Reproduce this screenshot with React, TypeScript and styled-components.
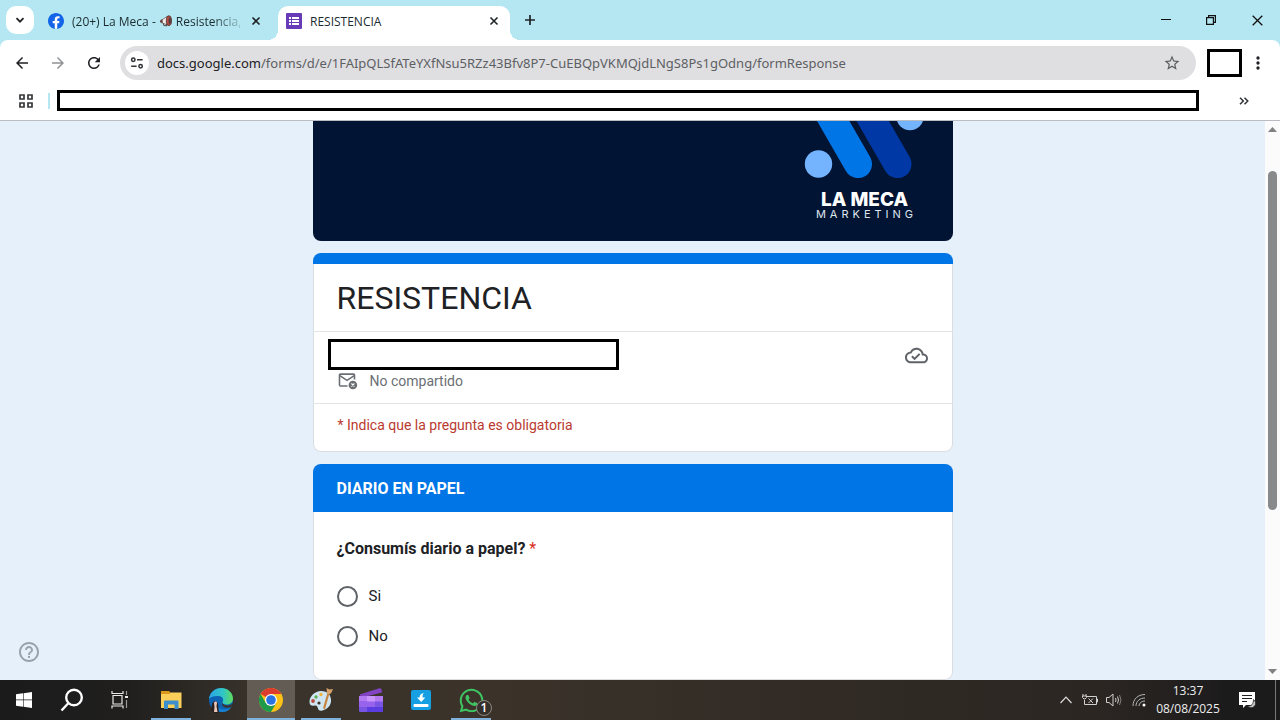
import React from 'react';
import styled, { createGlobalStyle } from 'styled-components';
import { FaWhatsapp } from 'react-icons/fa';

const UI = '"Open Sans", "Noto Sans", sans-serif';
const FORM = 'Roboto, "Liberation Sans", sans-serif';

const GlobalStyle = createGlobalStyle`
  * { box-sizing: border-box; }
  body { margin: 0; font-family: ${FORM}; color: #202124; }
  button, input { font: inherit; color: inherit; border: 0; padding: 0; margin: 0; background: none; }
  svg { display: block; flex: none; }
`;

const Screen = styled.div`
  display: flex;
  flex-direction: column;
  height: 100vh;
  overflow: hidden;
  background: #b4e7f1;
`;

/* ---------- browser chrome ---------- */

const TabStrip = styled.header`
  display: flex;
  align-items: flex-end;
  height: 40px;
  padding-left: 6px;
  font-family: ${UI};
  font-size: 12px;
  color: #1c2b30;
`;

const TabSearch = styled.button`
  display: grid;
  place-items: center;
  width: 28px;
  height: 28px;
  margin-bottom: 6px;
  border-radius: 10px;
  background: #fff;
`;

const Tab = styled.div<{ $active?: boolean }>`
  position: relative;
  display: flex;
  align-items: center;
  gap: 8px;
  width: ${p => (p.$active ? 232 : 236)}px;
  height: 34px;
  margin-left: ${p => (p.$active ? 0 : 8)}px;
  padding: ${p => (p.$active ? '0 8px 4px 8px' : '0 14px 4px 6px')};
  border-radius: 10px 10px 0 0;
  background: ${p => (p.$active ? '#fff' : 'transparent')};

  &::before, &::after {
    content: '';
    display: ${p => (p.$active ? 'block' : 'none')};
    position: absolute;
    bottom: 0;
    width: 10px;
    height: 10px;
  }
  &::before { left: -10px; background: radial-gradient(circle at 0 0, transparent 10px, #fff 10px); }
  &::after { right: -10px; background: radial-gradient(circle at 100% 0, transparent 10px, #fff 10px); }
`;

const TabTitle = styled.span<{ $fade?: boolean }>`
  display: flex;
  align-items: center;
  gap: 3px;
  flex: 1;
  min-width: 0;
  white-space: nowrap;
  mask-image: ${p => (p.$fade ? 'linear-gradient(to right, #000 84%, rgba(0, 0, 0, 0.2))' : 'none')};
`;

const IconButton = styled.button<{ $w?: number; $h?: number }>`
  display: grid;
  place-items: center;
  flex: none;
  width: ${p => p.$w ?? 16}px;
  height: ${p => p.$h ?? 16}px;
`;

const NewTab = styled(IconButton)`
  margin: 0 auto 6px 6px;
`;

const Chrome = styled.div`
  height: 81px;
  flex: none;
  border-radius: 8px 8px 0 0;
  border-bottom: 1px solid #b9bdc1;
  background: #fff;
  color: #202124;
  font-family: ${UI};
`;

const Toolbar = styled.div`
  display: flex;
  align-items: center;
  height: 46px;
  padding: 0 10px 0 4px;
`;

const Omnibox = styled.form`
  display: flex;
  align-items: center;
  flex: 1;
  height: 34px;
  margin: 0 11px 0 8px;
  padding: 0 14px 0 5px;
  border-radius: 17px;
  background: #dfdfe2;
  font-family: "Noto Sans", "Open Sans", sans-serif;
  font-size: 13px;
`;

const SiteInfo = styled(IconButton)`
  margin-right: 8px;
  border-radius: 50%;
  background: #fff;
`;

const UrlPath = styled.input`
  flex: 1;
  min-width: 0;
  color: #5d6063;
  outline: 0;
`;

const Redacted = styled.div<{ $w?: number; $h: number }>`
  flex: ${p => (p.$w ? 'none' : 1)};
  width: ${p => (p.$w ? `${p.$w}px` : 'auto')};
  height: ${p => p.$h}px;
  border: 3px solid #000;
  background: #fff;
`;

const MenuButton = styled(IconButton)`
  margin-left: 4px;
`;

const Bookmarks = styled.nav`
  display: flex;
  align-items: center;
  height: 29px;
  padding: 0 24px 0 16px;
`;

const Divider = styled.span`
  width: 2px;
  height: 16px;
  margin: 0 7px 0 12px;
  background: #b4e7f1;
`;

const More = styled(IconButton)`
  margin-left: 33px;
`;

/* ---------- page ---------- */

const Viewport = styled.div`
  position: relative;
  display: flex;
  flex: 1;
  min-height: 0;
  background: #e5f0fb;
`;

const Page = styled.main`
  flex: 1;
  min-width: 0;
  overflow: hidden;
`;

const Column = styled.div`
  display: flex;
  flex-direction: column;
  gap: 12px;
  max-width: 640px;
  margin: 0 auto;
`;

const Banner = styled.div`
  display: flex;
  justify-content: flex-end;
  height: 120px;
  padding-right: 23px;
  border-radius: 0 0 8px 8px;
  background: #021433;
`;

const Brand = styled.div`
  display: flex;
  flex-direction: column;
  align-items: center;
  width: 130px;
  color: #fff;
  font-family: Inter, sans-serif;
`;

const BrandName = styled.strong`
  margin-top: 9px;
  font-size: 19px;
  font-weight: 800;
  line-height: 20px;
`;

const BrandSub = styled.span`
  padding-left: 4px;
  color: #dfe5ee;
  font-size: 11px;
  line-height: 8px;
  letter-spacing: 4px;
`;

const Card = styled.section`
  overflow: hidden;
  border-radius: 8px;
  background: #fff;
  box-shadow: inset 0 0 0 1px #dadce0;
`;

const Accent = styled.div`
  height: 11px;
  background: #0075e6;
`;

const Title = styled.h1`
  margin: 0;
  padding: 13px 24px 11px;
  font-size: 32px;
  font-weight: 400;
  line-height: 43px;
`;

const Account = styled.div`
  display: flex;
  justify-content: space-between;
  height: 73px;
  padding: 7px 25px 0 15px;
  border: solid #e2e4e7;
  border-width: 1px 0;
`;

const NotShared = styled.div`
  display: flex;
  align-items: center;
  gap: 12px;
  padding: 1px 0 0 10px;
  color: #6b6f74;
  font-size: 14px;
  line-height: 20px;
`;

const Saved = styled.div`
  padding-top: 5px;
`;

const Required = styled.p`
  margin: 0;
  padding: 11px 25px 17px;
  color: #b93a2f;
  font-size: 14px;
  line-height: 20px;
`;

const SectionHead = styled.h2`
  margin: 0;
  padding: 13px 24px 11px;
  background: #0075e6;
  color: #fff;
  font-size: 16px;
  font-weight: 700;
  line-height: 24px;
`;

const Question = styled.fieldset`
  margin: 0;
  border: 0;
  padding: 25px 24px 24px;
`;

const Legend = styled.legend`
  float: left;
  width: 100%;
  padding: 0;
  margin-bottom: 15px;
  font-size: 16px;
  font-weight: 700;
  line-height: 24px;
`;

const Star = styled.span`
  color: #d93025;
  font-weight: 400;
`;

const Option = styled.label`
  display: flex;
  align-items: center;
  clear: both;
  gap: 11px;
  height: 40px;
  font-size: 15px;
`;

const Radio = styled.input`
  appearance: none;
  width: 21px;
  height: 21px;
  border: 2px solid #5f6368;
  border-radius: 50%;
  &:checked { border-color: #0075e6; background: radial-gradient(#0075e6 5px, transparent 6px); }
`;

const Help = styled.button`
  position: absolute;
  left: 17px;
  bottom: 16px;
  color: #9aa2ab;
`;

const Scrollbar = styled.div`
  display: flex;
  flex-direction: column;
  align-items: center;
  width: 15px;
  padding: 4px 0;
  background: #fbfbfc;
`;

const Track = styled.div`
  display: flex;
  flex-direction: column;
  flex: 1;
  padding: 37px 0 157px;
`;

const Thumb = styled.div`
  flex: 1;
  width: 9px;
  border-radius: 5px;
  background: #87898b;
`;

/* ---------- taskbar ---------- */

const Taskbar = styled.footer`
  display: flex;
  flex: none;
  height: 40px;
  background: linear-gradient(to right, #1b1b1c 0%, #201f1e 10%, #39332b 20%, #3b332a 38%, #332c26 60%, #2b2622 86%, #1c1b1c 96%);
  color: #fff;
  font-family: ${UI};
`;

const TaskButton = styled.button<{ $state?: 'open' | 'active' }>`
  position: relative;
  display: grid;
  place-items: center;
  width: 48px;
  height: 40px;
  background: ${p => (p.$state === 'active' ? '#625c55' : 'transparent')};

  &::after {
    content: '';
    display: ${p => (p.$state ? 'block' : 'none')};
    position: absolute;
    bottom: 0;
    left: ${p => (p.$state === 'active' ? 0 : 4)}px;
    right: ${p => (p.$state === 'active' ? 0 : 4)}px;
    height: 2px;
    background: #7fb2dc;
  }
`;

const Apps = styled.div`
  display: flex;
  gap: 2px;
  flex: 1;
  padding-left: 3px;
`;

const Badge = styled.span`
  position: absolute;
  left: 29px;
  top: 20px;
  display: grid;
  place-items: center;
  width: 16px;
  height: 16px;
  border: 1px solid #8c8780;
  border-radius: 50%;
  background: #35302a;
  font-size: 12px;
  font-weight: 600;
  line-height: 14px;
`;

const Tray = styled.div`
  display: flex;
  align-items: center;
`;

const Clock = styled.time`
  width: 72px;
  margin-right: 8px;
  color: #eee;
  font-size: 12px;
  line-height: 18px;
  text-align: center;
`;

const ShowDesktop = styled.button`
  width: 5px;
  height: 40px;
  margin-left: 13px;
  border-left: 1px solid #77787a;
`;

/* ---------- icons ---------- */

const Material = ({ d, size, color = 'currentColor' }: { d: string; size: number; color?: string }) => (
  <svg width={size} height={size} viewBox="0 0 24 24" fill={color}><path d={d} /></svg>
);

const BACK = 'M20 11H7.83l5.59-5.59L12 4l-8 8 8 8 1.41-1.41L7.83 13H20v-2z';
const FORWARD = 'M4 13h12.17l-5.59 5.59L12 20l8-8-8-8-1.41 1.41L16.17 11H4v2z';
const RELOAD = 'M17.65 6.35C16.2 4.9 14.21 4 12 4c-4.42 0-7.99 3.58-7.99 8s3.57 8 7.99 8c3.73 0 6.84-2.55 7.73-6h-2.08c-.82 2.33-3.04 4-5.65 4-3.31 0-6-2.69-6-6s2.69-6 6-6c1.66 0 3.14.69 4.22 1.78L13 11h7V4l-2.35 2.35z';
const STAR = 'M22 9.24l-7.19-.62L12 2 9.19 8.63 2 9.24l5.46 4.73L5.82 21 12 17.27 18.18 21l-1.63-7.03L22 9.24zM12 15.4l-3.76 2.27 1-4.28-3.32-2.88 4.38-.38L12 6.1l1.71 4.04 4.38.38-3.32 2.88 1 4.28L12 15.4z';
const DOTS = 'M12 8a2 2 0 100-4 2 2 0 000 4zm0 2a2 2 0 100 4 2 2 0 000-4zm0 6a2 2 0 100 4 2 2 0 000-4z';
const CLOUD = 'M19.35 10.04C18.67 6.59 15.64 4 12 4 9.11 4 6.6 5.64 5.35 8.04 2.34 8.36 0 10.91 0 14c0 3.31 2.69 6 6 6h13c2.76 0 5-2.24 5-5 0-2.64-2.05-4.78-4.65-4.96zM19 18H6c-2.21 0-4-1.79-4-4 0-2.05 1.53-3.76 3.56-3.97l1.07-.11.5-.95C8.08 7.14 9.94 6 12 6c2.62 0 4.88 1.86 5.39 4.43l.3 1.5 1.53.11c1.56.1 2.78 1.41 2.78 2.96 0 1.65-1.35 3-3 3zm-9-3.82l-2.09-2.09L6.5 13.5 10 17l6.01-6.01-1.41-1.41z';
const HELP = 'M11 18h2v-2h-2v2zm1-16C6.48 2 2 6.48 2 12s4.48 10 10 10 10-4.48 10-10S17.52 2 12 2zm0 18c-4.41 0-8-3.59-8-8s3.59-8 8-8 8 3.59 8 8-3.59 8-8 8zm0-14c-2.21 0-4 1.79-4 4h2c0-1.1.9-2 2-2s2 .9 2 2c0 2-3 1.75-3 5h2c0-2.25 3-2.5 3-5 0-2.21-1.79-4-4-4z';
const FACEBOOK = 'M24 12.073c0-6.627-5.373-12-12-12s-12 5.373-12 12c0 5.99 4.388 10.954 10.125 11.854v-8.385H7.078v-3.47h3.047V9.43c0-3.007 1.792-4.669 4.533-4.669 1.312 0 2.686.235 2.686.235v2.953H15.83c-1.491 0-1.956.925-1.956 1.874v2.25h3.328l-.532 3.47h-2.796v8.385C19.612 23.027 24 18.062 24 12.073z';

const CloseIcon = () => (
  <svg width="10" height="10" viewBox="0 0 10 10" stroke="#1f2426" strokeWidth="1.6"><path d="M1.5 1.5l7 7M8.5 1.5l-7 7" /></svg>
);

const FacebookIcon = () => (
  <svg width="16" height="16" viewBox="0 0 24 24"><circle cx="12" cy="12" r="11" fill="#fff" /><path fill="#1464e8" d={FACEBOOK} /></svg>
);

const Megaphone = () => (
  <svg width="14" height="12" viewBox="0 0 16 14">
    <path d="M1.5 7 L9.5 1.5 L10.5 12 L2 8.6z" fill="#f1ece9" stroke="#5c4b49" strokeWidth=".8" />
    <path d="M1.2 6.4l2.6-1.6.5 4.6-3-1z" fill="#5c3f3d" />
    <path d="M5 9.8l.4 2.4 3.4.5-.4-2" fill="none" stroke="#4a3b39" strokeWidth="1.1" />
    <ellipse cx="11.4" cy="6.6" rx="3" ry="5.6" fill="#bb4a42" stroke="#46302f" />
    <ellipse cx="12.4" cy="6.6" rx="1.4" ry="3.8" fill="#503f40" />
  </svg>
);

const FormsIcon = () => (
  <svg width="16" height="16" viewBox="0 0 16 16">
    <rect width="16" height="16" rx="1" fill="#673ab7" />
    <path fill="#fff" d="M3 4h2v2H3zm3 0h7v2H6zM3 7h2v2H3zm3 0h7v2H6zM3 10h2v2H3zm3 0h7v2H6z" />
  </svg>
);

const TuneIcon = () => (
  <svg width="14" height="14" viewBox="0 0 14 14" fill="none" stroke="#303235" strokeWidth="1.5">
    <circle cx="3.3" cy="3.8" r="1.7" /><path d="M7 3.8h5.6M1.2 10.2h5.4" /><circle cx="10.6" cy="10.2" r="1.7" />
  </svg>
);

const GridIcon = () => (
  <svg width="18" height="18" viewBox="0 0 18 18" fill="none" stroke="#35373a" strokeWidth="1.7">
    <path d="M3 3h4v4H3zM11 3h4v4h-4zM3 11h4v4H3zM11 11h4v4h-4z" />
  </svg>
);

const MailOff = () => (
  <svg width="20" height="18" viewBox="0 0 20 18" fill="none" stroke="#6b6f74">
    <path d="M9.5 14H2.4a.9.9 0 01-.9-.9V3a.9.9 0 01.9-.9h13.2a.9.9 0 01.9.9v4.6" strokeWidth="1.6" />
    <path d="M1.8 3.6L9 8.4l7.2-4.8" strokeWidth="1.6" />
    <circle cx="14.9" cy="13" r="4.3" fill="#6b6f74" stroke="none" />
    <path d="M13.4 11.5l3 3m0-3l-3 3" stroke="#fff" strokeWidth="1.1" />
  </svg>
);

const LogoMark = () => (
  <svg width="130" height="60" viewBox="0 0 130 60">
    <path d="M58 43L24-16" stroke="#0075e6" strokeWidth="28" strokeLinecap="round" />
    <path d="M97.5 43L63.5-16" stroke="#0039a6" strokeWidth="28" strokeLinecap="round" />
    <circle cx="18.5" cy="43" r="13.7" fill="#74b4ff" />
    <circle cx="110" cy="-4.5" r="13.7" fill="#74b4ff" />
  </svg>
);

const Arrow = ({ down = false }: { down?: boolean }) => (
  <svg width="9" height="9" viewBox="0 0 9 9" fill="#7f8183"><path d={down ? 'M0 2h9L4.5 7z' : 'M0 7h9L4.5 2z'} /></svg>
);

const WindowsIcon = () => (
  <svg width="16" height="16" viewBox="0 0 16 16" fill="#fff">
    <path d="M0 2.3L7 1.3V7.6H0zM7.6 1.2L16 0v7.6H7.6zM0 8.3h7v6.4l-7-1zM7.6 8.3H16V16l-8.4-1.2z" />
  </svg>
);

const SearchIcon = () => (
  <svg width="24" height="24" viewBox="0 0 24 24" fill="none" stroke="#fff" strokeWidth="2.4">
    <circle cx="14" cy="9.5" r="7.8" /><path d="M8.5 15L1.5 22.5" />
  </svg>
);

const TaskView = () => (
  <svg width="18" height="18" viewBox="0 0 18 18" fill="none" stroke="#e8e8e8" strokeWidth="1.2">
    <path d="M2 4.5h9v8.5H2zM1 0v2.5h11V0M1 17.5V15h11v2.5" /><path d="M15.5 0v4M15.5 9v8" stroke="#999" /><path d="M14 6h3" strokeWidth="2" />
  </svg>
);

const FolderIcon = () => (
  <svg width="22" height="20" viewBox="0 0 22 20">
    <path d="M1 1h8l2 2v5H1z" fill="#d99a1c" /><path d="M1 4h8l2-1.5h10.5V18H1z" fill="#fbd05a" />
    <path d="M4 11.5a1 1 0 011-1h12.5a1 1 0 011 1V19h-4v-4.5H8V19H4z" fill="#3d8fcb" />
  </svg>
);

const EdgeIcon = () => (
  <svg width="26" height="26" viewBox="0 0 26 26">
    <defs>
      <linearGradient id="edgeTop" x1="0" x2="1"><stop offset="0" stopColor="#2aa5e8" /><stop offset=".6" stopColor="#32c7c4" /><stop offset="1" stopColor="#5fdc5a" /></linearGradient>
    </defs>
    <circle cx="13" cy="13" r="12" fill="#0d62b4" />
    <path d="M1 12C2 5 7 1 13 1c7 0 12 5 12 10.5 0 4-3 6-6.5 6-3 0-4.5-1-4-2.2 1.5-2.5.5-6-4-6.3C6 8.8 2.5 10 1 12z" fill="url(#edgeTop)" />
    <path d="M9 12c-3 5 1 11 8 10.5 3-.3 5-1.5 6.5-3-2 4-6 6-10.5 5.5C8 24 5 18 9 12z" fill="#1681d2" />
    <path d="M14.5 15.5c0 2 3 3.5 6 3l4-1.5-1 2.5c-4 2.5-9 1-9.5-2z" fill="#3a332b" />
    <path d="M3 23l1-6c1-3.5 5-4 6 0l1 9H6z" fill="#2a2022" /><path d="M6 15.5c1-1.5 3-1 3 .5l-.5 3 1 6H6l.5-5z" fill="#e9c7ba" />
  </svg>
);

const ChromeIcon = () => (
  <svg width="24" height="24" viewBox="0 0 24 24">
    <circle cx="12" cy="12" r="12" fill="#fbc116" />
    <path d="M12 12L1.6 6A12 12 0 0122.4 6H12z" fill="#dc3b2e" />
    <path d="M1.6 6A12 12 0 0012 24l5.2-9L12 12 6.8 15z" fill="#1e9a4a" />
    <circle cx="12" cy="12" r="6" fill="#fff" /><circle cx="12" cy="12" r="4.8" fill="#2b72e2" />
  </svg>
);

const PaintIcon = () => (
  <svg width="26" height="26" viewBox="0 0 26 26">
    <path d="M13 4C7 4 1.5 9 1.5 15c0 4 3 4 5 3.5 2.5-.5 3 1 3.5 3s2 2.500 4.500 2C20 22 23.500 18 23 12.500 22.500 7 18.500 4 13 4z" fill="#cfe6f2" />
    <circle cx="5" cy="14" r="1.9" fill="#b94b3c" /><circle cx="8" cy="10" r="1.7" fill="#5dae54" /><circle cx="13" cy="7.5" r="1.7" fill="#f0b53d" />
    <circle cx="11" cy="16" r="1.6" fill="#3b332a" />
    <path d="M19.5 5.5l2 .7-4.500 16-2-1z" fill="#c8843d" /><path d="M18.5 1l3 1.500L25 2l-1.500 3.500-2 2-2.500-1z" fill="#d6a469" />
  </svg>
);

const ClipIcon = () => (
  <svg width="26" height="26" viewBox="0 0 26 26">
    <path d="M1.5 7.5L21.5 1.3q1.5-.3 2 1.2l.5 3L4 10.5z" fill="#8443c4" />
    <rect x="1" y="9" width="24" height="16" rx="1.5" fill="#7a55e4" />
    <path d="M1 9h24v5.5H1z" fill="#b379f1" /><path d="M1 14.5h16V20H1z" fill="#9863ec" /><path d="M9 9h8v5.5H9z" fill="#c995fb" /><path d="M9 20h16v5H9z" fill="#5b3ce0" />
  </svg>
);

const DownloadIcon = () => (
  <svg width="20" height="20" viewBox="0 0 20 20">
    <rect width="20" height="20" rx="2" fill="#169fe3" />
    <path d="M13 3C10 3.5 8.6 5 8.6 7.5H6l4.2 4.5 4.2-4.5h-2.8c-.2-2 .2-3.5 1.4-4.5z" fill="#fff" /><rect x="2.5" y="14" width="15" height="3" rx="1" fill="#fff" />
  </svg>
);

const BatteryIcon = () => (
  <svg width="16" height="12" viewBox="0 0 16 12" fill="none" stroke="#d0d0d0">
    <path d="M4 2.5h10.5v8h-12V6M14.5 5h1v3h-1M1 0v2M4 0v2M.5 2h4v1.5L3 5H2L.5 3.5zM6.5 4.5l4.5 4.5m0-4.5L6.5 9" />
  </svg>
);

const SpeakerIcon = () => (
  <svg width="16" height="14" viewBox="0 0 16 14" fill="none" stroke="#d0d0d0">
    <path d="M.5 4.5H3l4-3.5v12l-4-3.5H.5zM9.5 5q1 2 0 4M11.5 3.5q2 3.5 0 7" /><path d="M13.5 2q3 5 0 10" stroke="#85827f" />
  </svg>
);

const WifiIcon = () => (
  <svg width="14" height="14" viewBox="0 0 14 14" fill="none" stroke="#b8b8b8">
    <path d="M1 13C1 6 6 1.5 13 1.5M4 13c0-5 4-8 9-8M7 13c0-3 3-5 6-5" /><circle cx="12" cy="12" r="1.5" fill="#fff" stroke="none" />
  </svg>
);

const NoticeIcon = () => (
  <svg width="18" height="17" viewBox="0 0 18 17">
    <path d="M1 0h16v13H8l-3 3v-3H1z" fill="#fff" /><path d="M4 3.5h10M4 6.5h10M4 9.5h5" stroke="#222" />
    <path d="M15.5 7.5a4.500 4.500 0 11-6 6.500c4 .5 6-2 6-6.500z" fill="#c6c6c6" stroke="#222" strokeWidth=".8" />
  </svg>
);

const options = ['Si', 'No'];

export default function App() {
  return (
    <Screen>
      <GlobalStyle />
      <TabStrip>
        <TabSearch aria-label="Buscar pestañas">
          <svg width="10" height="10" viewBox="0 0 10 10" fill="none" stroke="#222" strokeWidth="1.8"><path d="M1.5 3.2L5 6.7l3.5-3.5" /></svg>
        </TabSearch>
        <Tab>
          <FacebookIcon />
          <TabTitle $fade>(20+) La Meca - <Megaphone /> Resistencia,</TabTitle>
          <IconButton aria-label="Cerrar pestaña"><CloseIcon /></IconButton>
        </Tab>
        <Tab $active>
          <FormsIcon />
          <TabTitle>RESISTENCIA</TabTitle>
          <IconButton aria-label="Cerrar pestaña"><CloseIcon /></IconButton>
        </Tab>
        <NewTab aria-label="Nueva pestaña" $w={28} $h={28}>
          <svg width="12" height="12" viewBox="0 0 12 12" stroke="#1f2426" strokeWidth="1.7"><path d="M6 1v10M1 6h10" /></svg>
        </NewTab>
        <IconButton aria-label="Minimizar" $w={45} $h={40}>
          <svg width="10" height="10" viewBox="0 0 10 10" stroke="#111"><path d="M0 4.5h10" /></svg>
        </IconButton>
        <IconButton aria-label="Restaurar" $w={46} $h={40}>
          <svg width="10" height="10" viewBox="0 0 10 10" fill="none" stroke="#111" strokeWidth="1.2"><path d="M.6 2.6h6.8v6.8H.6zM2.6 2.6v-2h6.8v6.8h-2" /></svg>
        </IconButton>
        <IconButton aria-label="Cerrar" $w={46} $h={40}>
          <svg width="11" height="11" viewBox="0 0 11 11" stroke="#111" strokeWidth="1.3"><path d="M.7.7l9.6 9.6M10.3.7L.7 10.3" /></svg>
        </IconButton>
      </TabStrip>

      <Chrome>
        <Toolbar>
          <IconButton aria-label="Atrás" $w={36} $h={34}><Material d={BACK} size={18} /></IconButton>
          <IconButton aria-label="Adelante" $w={36} $h={34}><Material d={FORWARD} size={18} color="#919395" /></IconButton>
          <IconButton aria-label="Recargar" $w={36} $h={34}><Material d={RELOAD} size={18} /></IconButton>
          <Omnibox onSubmit={e => e.preventDefault()}>
            <SiteInfo type="button" aria-label="Información del sitio" $w={24} $h={24}><TuneIcon /></SiteInfo>
            <label htmlFor="url">docs.google.com</label>
            <UrlPath id="url" defaultValue="/forms/d/e/1FAIpQLSfATeYXfNsu5RZz43Bfv8P7-CuEBQpVKMQjdLNgS8Ps1gOdng/formResponse" />
            <IconButton type="button" aria-label="Agregar a favoritos" $w={20} $h={20}><Material d={STAR} size={18} color="#5c5e61" /></IconButton>
          </Omnibox>
          <Redacted $w={35} $h={28} />
          <MenuButton aria-label="Menú" $w={24} $h={34}><Material d={DOTS} size={20} /></MenuButton>
        </Toolbar>
        <Bookmarks>
          <IconButton aria-label="Grupos de pestañas" $w={20} $h={18}><GridIcon /></IconButton>
          <Divider />
          <Redacted $h={21} />
          <More aria-label="Más favoritos" $w={24}>
            <svg width="10" height="8" viewBox="0 0 10 8" fill="none" stroke="#303235" strokeWidth="1.5"><path d="M1 .7L4.3 4 1 7.3M5.5.7L8.8 4 5.5 7.3" /></svg>
          </More>
        </Bookmarks>
      </Chrome>

      <Viewport>
        <Page>
          <Column>
            <Banner>
              <Brand>
                <LogoMark />
                <BrandName>LA MECA</BrandName>
                <BrandSub>MARKETING</BrandSub>
              </Brand>
            </Banner>
            <Card>
              <Accent />
              <Title>RESISTENCIA</Title>
              <Account>
                <div>
                  <Redacted $w={291} $h={31} />
                  <NotShared><MailOff />No compartido</NotShared>
                </div>
                <Saved><Material d={CLOUD} size={23} color="#5f6368" /></Saved>
              </Account>
              <Required>* Indica que la pregunta es obligatoria</Required>
            </Card>
            <Card>
              <SectionHead>DIARIO EN PAPEL</SectionHead>
              <Question>
                <Legend>¿Consumís diario a papel? <Star>*</Star></Legend>
                {options.map(o => (
                  <Option key={o}><Radio type="radio" name="diario" value={o} />{o}</Option>
                ))}
              </Question>
            </Card>
          </Column>
        </Page>
        <Help aria-label="Ayuda"><Material d={HELP} size={24} /></Help>
        <Scrollbar>
          <Arrow />
          <Track><Thumb /></Track>
          <Arrow down />
        </Scrollbar>
      </Viewport>

      <Taskbar>
        <TaskButton aria-label="Inicio"><WindowsIcon /></TaskButton>
        <TaskButton aria-label="Buscar"><SearchIcon /></TaskButton>
        <TaskButton aria-label="Vista de tareas"><TaskView /></TaskButton>
        <Apps>
          <TaskButton aria-label="Explorador" $state="open"><FolderIcon /></TaskButton>
          <TaskButton aria-label="Edge"><EdgeIcon /></TaskButton>
          <TaskButton aria-label="Chrome" $state="active"><ChromeIcon /></TaskButton>
          <TaskButton aria-label="Paint" $state="open"><PaintIcon /></TaskButton>
          <TaskButton aria-label="Clipchamp"><ClipIcon /></TaskButton>
          <TaskButton aria-label="Descargas"><DownloadIcon /></TaskButton>
          <TaskButton aria-label="WhatsApp" $state="open"><FaWhatsapp size={27} color="#3fc463" /><Badge>1</Badge></TaskButton>
        </Apps>
        <Tray>
          <IconButton aria-label="Mostrar iconos ocultos" $w={24} $h={40}>
            <svg width="12" height="8" viewBox="0 0 12 8" fill="none" stroke="#ddd" strokeWidth="1.2"><path d="M.5 7L6 1.2 11.5 7" /></svg>
          </IconButton>
          <IconButton aria-label="Batería" $w={24} $h={40}><BatteryIcon /></IconButton>
          <IconButton aria-label="Volumen" $w={24} $h={40}><SpeakerIcon /></IconButton>
          <IconButton aria-label="Red" $w={26} $h={40}><WifiIcon /></IconButton>
          <Clock>13:37<br />08/08/2025</Clock>
          <IconButton aria-label="Notificaciones" $w={30} $h={40}><NoticeIcon /></IconButton>
          <ShowDesktop aria-label="Mostrar escritorio" />
        </Tray>
      </Taskbar>
    </Screen>
  );
}
